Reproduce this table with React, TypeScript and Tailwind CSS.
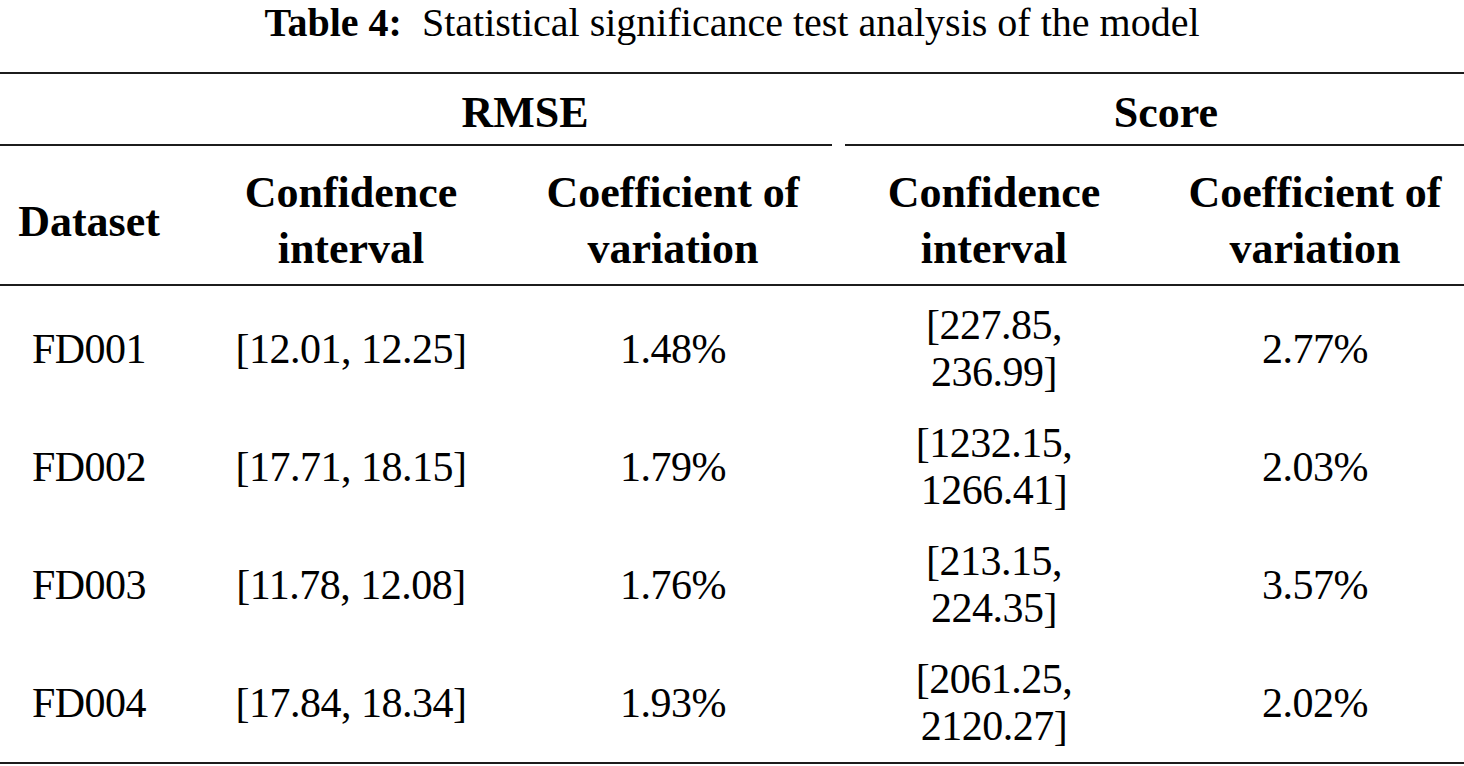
import React from 'react';

const rows = [
  { name: 'FD001', rci: '[12.01, 12.25]', rcv: '1.48%', sci: ['[227.85,', '236.99]'], scv: '2.77%' },
  { name: 'FD002', rci: '[17.71, 18.15]', rcv: '1.79%', sci: ['[1232.15,', '1266.41]'], scv: '2.03%' },
  { name: 'FD003', rci: '[11.78, 12.08]', rcv: '1.76%', sci: ['[213.15,', '224.35]'], scv: '3.57%' },
  { name: 'FD004', rci: '[17.84, 18.34]', rcv: '1.93%', sci: ['[2061.25,', '2120.27]'], scv: '2.02%' },
];

const cols = 'grid grid-cols-[178px_346px_298px_344px_298px]';

const App: React.FC = () => {
  return (
    <div className="w-[1464px] h-[766px] bg-white text-black font-['Liberation_Serif',serif] overflow-hidden">
      {/* Caption */}
      <div className="h-[72px] text-center text-[40px] leading-[45px]">
        <span className="font-bold">Table 4:</span>
        <span className="ml-[20px]">Statistical significance test analysis of the model</span>
      </div>

      <div className="h-[2px] bg-[#1c1c1c]" />

      {/* Group header */}
      <div className={`${cols} h-[70px] font-bold text-[44px] leading-[52px]`}>
        <div />
        <div className="col-span-2 pt-[13px] pl-[50px] text-center">RMSE</div>
        <div className="col-span-2 pt-[13px] pl-[46px] text-center">Score</div>
      </div>

      <div className="flex gap-[13px]">
        <div className="w-[832px] h-[2px] bg-[#1c1c1c]" />
        <div className="flex-1 h-[2px] bg-[#1c1c1c]" />
      </div>

      {/* Column header */}
      <div className={`${cols} h-[138px] font-bold text-[44px] leading-[56px] text-center`}>
        <div className="pt-[48px]">Dataset</div>
        <div className="pt-[19px]">Confidence<br />interval</div>
        <div className="pt-[19px]">Coefficient of<br />variation</div>
        <div className="pt-[19px]">Confidence<br />interval</div>
        <div className="pt-[19px]">Coefficient of<br />variation</div>
      </div>

      <div className="h-[2px] bg-[#1c1c1c]" />

      {/* Body */}
      <div className="pt-[4px] text-[42px] leading-[47px] tracking-[-0.5px]">
        {rows.map((r) => (
          <div key={r.name} className={`${cols} h-[118px] items-center text-center`}>
            <div>{r.name}</div>
            <div>{r.rci}</div>
            <div>{r.rcv}</div>
            <div>
              {r.sci[0]}
              <br />
              {r.sci[1]}
            </div>
            <div>{r.scv}</div>
          </div>
        ))}
      </div>

      <div className="h-[2px] bg-[#1c1c1c]" />
    </div>
  );
};

export default App;
